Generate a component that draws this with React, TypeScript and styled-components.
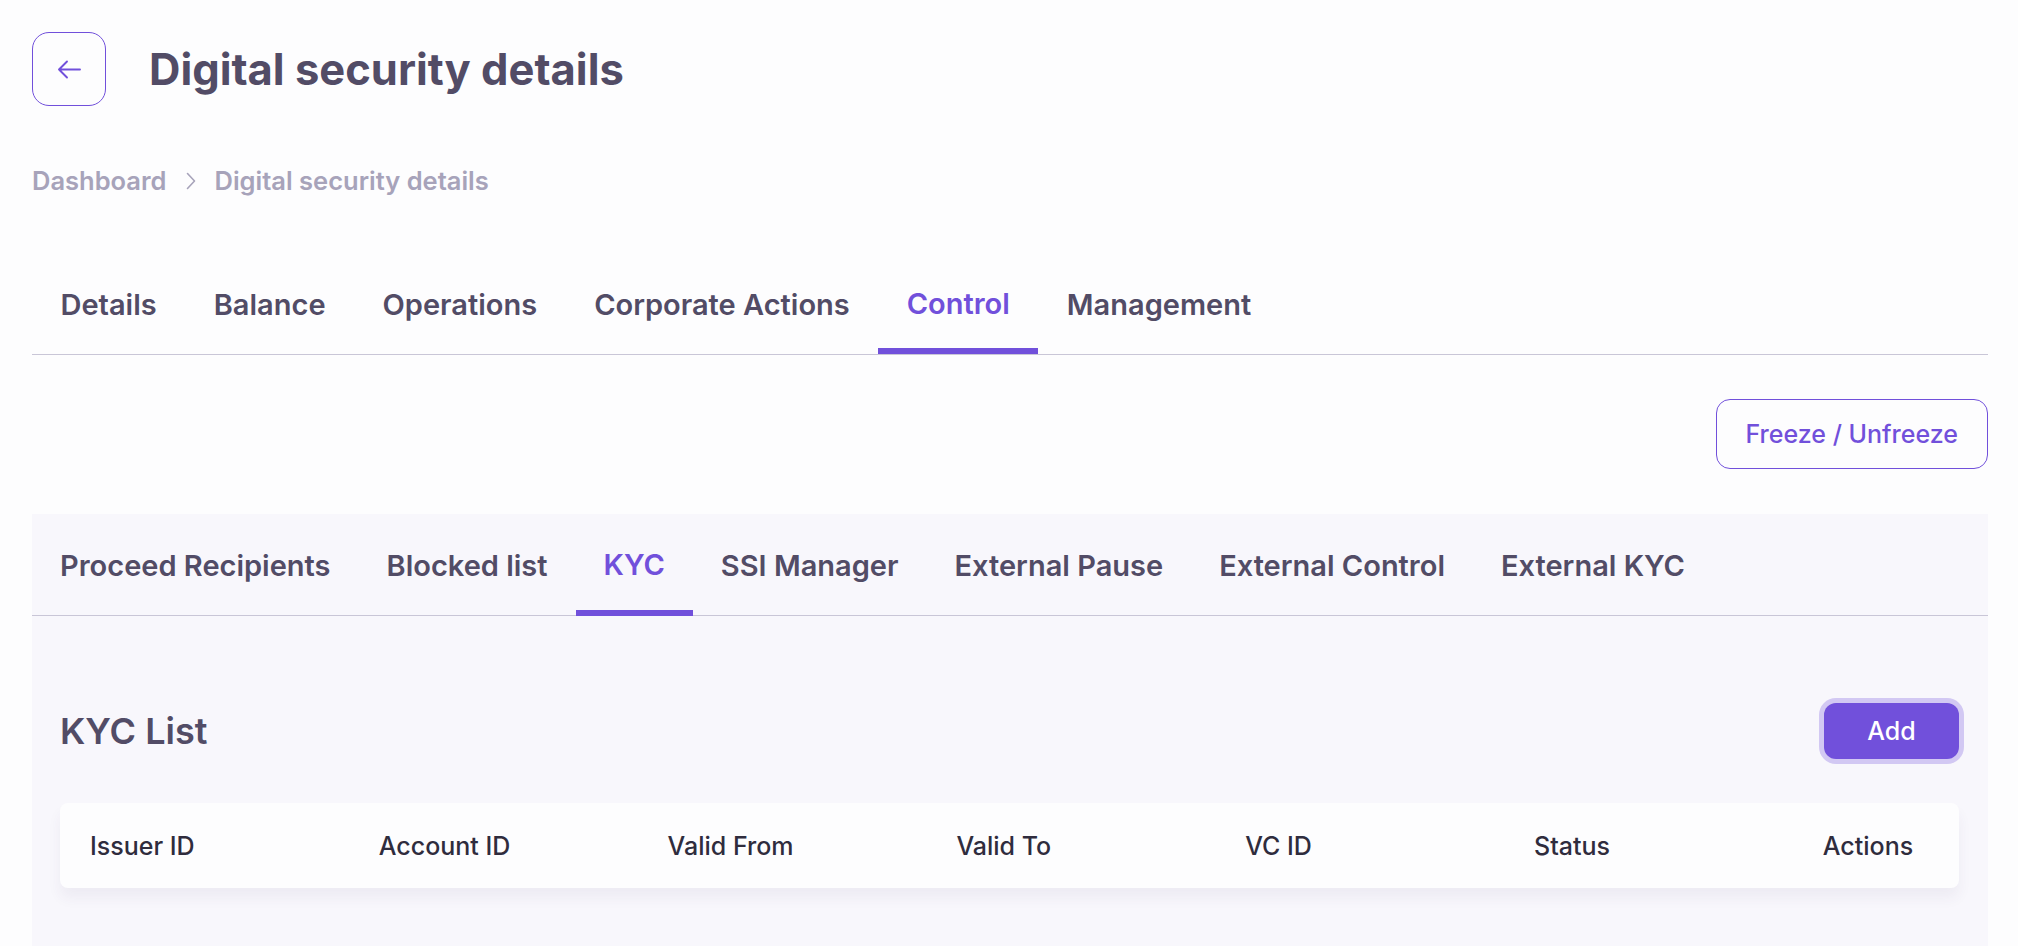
import styled, { createGlobalStyle } from "styled-components";

const COLORS = {
  PAGE: "#fdfdfe",
  PANEL: "#f8f7fc",
  TEXT: "#524c66",
  TEXT_DARK: "#2f2c3d",
  MUTED: "#a7a3ba",
  PURPLE: "#7150db",
  LINE: "#c9c6d7",
};

const MAIN_TABS = ["Details", "Balance", "Operations", "Corporate Actions", "Control", "Management"];
const SUB_TABS = [
  "Proceed Recipients",
  "Blocked list",
  "KYC",
  "SSI Manager",
  "External Pause",
  "External Control",
  "External KYC",
];
const COLUMNS = ["Issuer ID", "Account ID", "Valid From", "Valid To", "VC ID", "Status", "Actions"];

const GlobalStyle = createGlobalStyle`
  html, body {
    margin: 0;
    padding: 0;
    background: ${COLORS.PAGE};
    font-family: Inter, "Noto Sans", sans-serif;
    color: ${COLORS.TEXT};
  }
  * { box-sizing: border-box; }
`;

const BackArrow = () => (
  <svg width="24" height="19" viewBox="0 0 24 19" fill="none">
    <path
      d="M23 9.5H2M10 1.5L2 9.5L10 17.5"
      stroke="currentColor"
      strokeWidth="1.9"
      strokeLinecap="round"
      strokeLinejoin="round"
    />
  </svg>
);

const Chevron = () => (
  <svg width="10" height="18" viewBox="0 0 10 18" fill="none">
    <path
      d="M1.5 1.5L8.5 9L1.5 16.5"
      stroke={COLORS.MUTED}
      strokeWidth="1.6"
      strokeLinecap="round"
      strokeLinejoin="round"
    />
  </svg>
);

const App = () => {
  return (
    <>
      <GlobalStyle />
      <Page>
        <Header>
          <BackButton aria-label="Back">
            <BackArrow />
          </BackButton>
          <Title>Digital security details</Title>
        </Header>

        <Breadcrumb>
          <Crumb>Dashboard</Crumb>
          <Chevron />
          <Crumb>Digital security details</Crumb>
        </Breadcrumb>

        <TabList spaced>
          {MAIN_TABS.map((tab) => (
            <Tab key={tab} active={tab === "Control"}>
              {tab}
            </Tab>
          ))}
        </TabList>

        <Toolbar>
          <OutlineButton>Freeze / Unfreeze</OutlineButton>
        </Toolbar>

        <Panel>
          <TabList>
            {SUB_TABS.map((tab) => (
              <Tab key={tab} active={tab === "KYC"} sub>
                {tab}
              </Tab>
            ))}
          </TabList>

          <PanelBody>
            <SectionHeader>
              <SectionTitle>KYC List</SectionTitle>
              <PrimaryButton>Add</PrimaryButton>
            </SectionHeader>

            <TableCard>
              {COLUMNS.map((col) => (
                <HeaderCell key={col}>{col}</HeaderCell>
              ))}
            </TableCard>
          </PanelBody>
        </Panel>
      </Page>
    </>
  );
};

const Page = styled.div`
  display: flex;
  flex-direction: column;
  height: 946px;
  overflow: hidden;
  padding: 32px 30px 0 32px;
`;

const Header = styled.div`
  display: flex;
  align-items: center;
  gap: 43px;
`;

const BackButton = styled.button`
  width: 74px;
  height: 74px;
  flex-shrink: 0;
  display: flex;
  align-items: center;
  justify-content: center;
  background: transparent;
  border: 1.5px solid ${COLORS.PURPLE};
  border-radius: 17px;
  color: ${COLORS.PURPLE};
  padding: 0;
`;

const Title = styled.h1`
  margin: 0;
  font-size: 43.5px;
  line-height: 50px;
  font-weight: 700;
  color: ${COLORS.TEXT};
`;

const Breadcrumb = styled.nav`
  display: flex;
  align-items: center;
  gap: 19px;
  margin-top: 60px;
  height: 30px;
`;

const Crumb = styled.span`
  font-size: 25.5px;
  line-height: 30px;
  font-weight: 600;
  color: ${COLORS.MUTED};
`;

const TabList = styled.div<{ spaced?: boolean }>`
  display: flex;
  flex-shrink: 0;
  margin-top: ${({ spaced }) => (spaced ? "59px" : "0")};
  border-bottom: 1.5px solid ${COLORS.LINE};
`;

const Tab = styled.div<{ active?: boolean; sub?: boolean }>`
  padding: ${({ sub }) => (sub ? "35px 28px 28px" : "33px 28.5px 27px")};
  font-size: 29px;
  line-height: 34px;
  font-weight: 600;
  white-space: nowrap;
  color: ${({ active }) => (active ? COLORS.PURPLE : COLORS.TEXT)};
  margin-bottom: -1.5px;
  border-bottom: 6px solid ${({ active }) => (active ? COLORS.PURPLE : "transparent")};
  ${({ active }) => active && "transform: translateY(-1px);"}
`;

const Toolbar = styled.div`
  display: flex;
  justify-content: flex-end;
  margin-top: 44px;
`;

const OutlineButton = styled.button`
  height: 70px;
  padding: 0 29px;
  background: transparent;
  border: 1.5px solid ${COLORS.PURPLE};
  border-radius: 14px;
  color: ${COLORS.PURPLE};
  font-family: inherit;
  font-size: 25px;
  font-weight: 500;
`;

const Panel = styled.section`
  flex: 1;
  margin-top: 45px;
  background: ${COLORS.PANEL};
`;

const PanelBody = styled.div`
  padding: 87px 29px 0 28px;
`;

const SectionHeader = styled.div`
  display: flex;
  align-items: center;
  justify-content: space-between;
`;

const SectionTitle = styled.h2`
  margin: 0;
  font-size: 36px;
  line-height: 42px;
  font-weight: 600;
  color: ${COLORS.TEXT};
`;

const PrimaryButton = styled.button`
  width: 135px;
  height: 56px;
  background: ${COLORS.PURPLE};
  border: none;
  border-radius: 12px;
  color: #ffffff;
  font-family: inherit;
  font-size: 25px;
  font-weight: 500;
  box-shadow: 0 0 0 5px rgba(113, 80, 219, 0.28);
`;

const TableCard = styled.div`
  margin-top: 44px;
  height: 85px;
  display: grid;
  grid-template-columns: repeat(6, 288.8px) 1fr;
  align-items: center;
  padding-left: 30px;
  background: #fdfdfe;
  border-radius: 8px;
  box-shadow: 0 10px 14px rgba(60, 50, 110, 0.06);
`;

const HeaderCell = styled.div`
  font-size: 25px;
  font-weight: 500;
  color: ${COLORS.TEXT_DARK};
`;

export default App;
